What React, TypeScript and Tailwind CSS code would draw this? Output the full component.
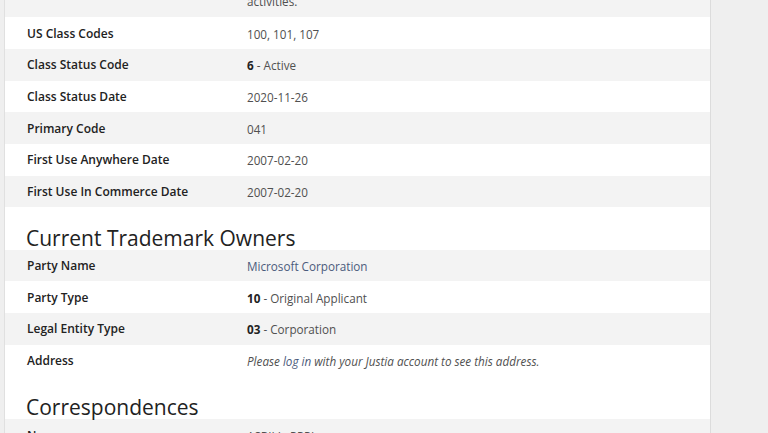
import React from 'react';

type Row = { label: string; value: React.ReactNode };

const details: Row[] = [
    { label: 'US Class Codes', value: '100, 101, 107' },
    { label: 'Class Status Code', value: <><b className="font-bold text-[#222]">6</b> - Active</> },
    { label: 'Class Status Date', value: '2020-11-26' },
    { label: 'Primary Code', value: '041' },
    { label: 'First Use Anywhere Date', value: '2007-02-20' },
    { label: 'First Use In Commerce Date', value: '2007-02-20' },
];

const owners: Row[] = [
    { label: 'Party Name', value: <a className="text-[#4b5b7c]">Microsoft Corporation</a> },
    { label: 'Party Type', value: <><b className="font-bold text-[#222]">10</b> - Original Applicant</> },
    { label: 'Legal Entity Type', value: <><b className="font-bold text-[#222]">03</b> - Corporation</> },
    {
        label: 'Address',
        value: (
            <span className="italic">
                Please <a className="text-[#4b5b7c]">log in</a> with your Justia account to see this address.
            </span>
        ),
    },
];

const DataRows: React.FC<{ rows: Row[]; startGrey: boolean }> = ({ rows, startGrey }) => (
    <div>
        {rows.map((r, i) => {
            const grey = startGrey ? i % 2 === 0 : i % 2 === 1;
            return (
                <div
                    key={r.label}
                    className={`flex items-center h-[31.7px] pt-[1px] ${grey ? 'bg-[#f3f3f3]' : 'bg-white'}`}
                >
                    <div className="w-[242px] pl-[22px] text-[12px] font-semibold text-[#222]">{r.label}</div>
                    <div className="flex-1 text-[11.7px] text-[#505050]">{r.value}</div>
                </div>
            );
        })}
    </div>
);

const SectionTitle: React.FC<{ children: React.ReactNode }> = ({ children }) => (
    <div className="h-[42.3px] flex items-end pl-[21px]">
        <h2 className="text-[21px] leading-[24px] text-[#222] font-normal">{children}</h2>
    </div>
);

const App: React.FC = () => {
    return (
        <div
            className="h-[433px] w-[768px] overflow-hidden flex bg-[#efefef] leading-[16px]"
            style={{ fontFamily: '"Open Sans", "Noto Sans", sans-serif' }}
        >
            {/* left gutter */}
            <div className="w-[5px] shrink-0 bg-[#efefef] border-r border-[#e0e0e0]" />

            {/* main panel */}
            <div className="w-[706px] shrink-0 bg-white border-r border-[#dcdcdc]">
                {/* tail of the previous row */}
                <div className="h-[17.3px] bg-[#f3f3f3] overflow-hidden flex">
                    <div className="w-[242px]" />
                    <div className="-mt-[7px] text-[11.7px] text-[#505050]">activities.</div>
                </div>

                <DataRows rows={details} startGrey={false} />

                <SectionTitle>Current Trademark Owners</SectionTitle>
                <DataRows rows={owners} startGrey={true} />

                <SectionTitle>Correspondences</SectionTitle>
                <div className="flex h-[31.7px] bg-[#f3f3f3] pt-[9px]">
                    <div className="w-[242px] pl-[22px] text-[12px] font-semibold text-[#222]">Name</div>
                    <div className="text-[11.7px] text-[#505050]">ASBILL, PPPL</div>
                </div>
            </div>

            {/* right sidebar */}
            <div className="flex-1 bg-[#efefef]" />
        </div>
    );
};

export default App;
